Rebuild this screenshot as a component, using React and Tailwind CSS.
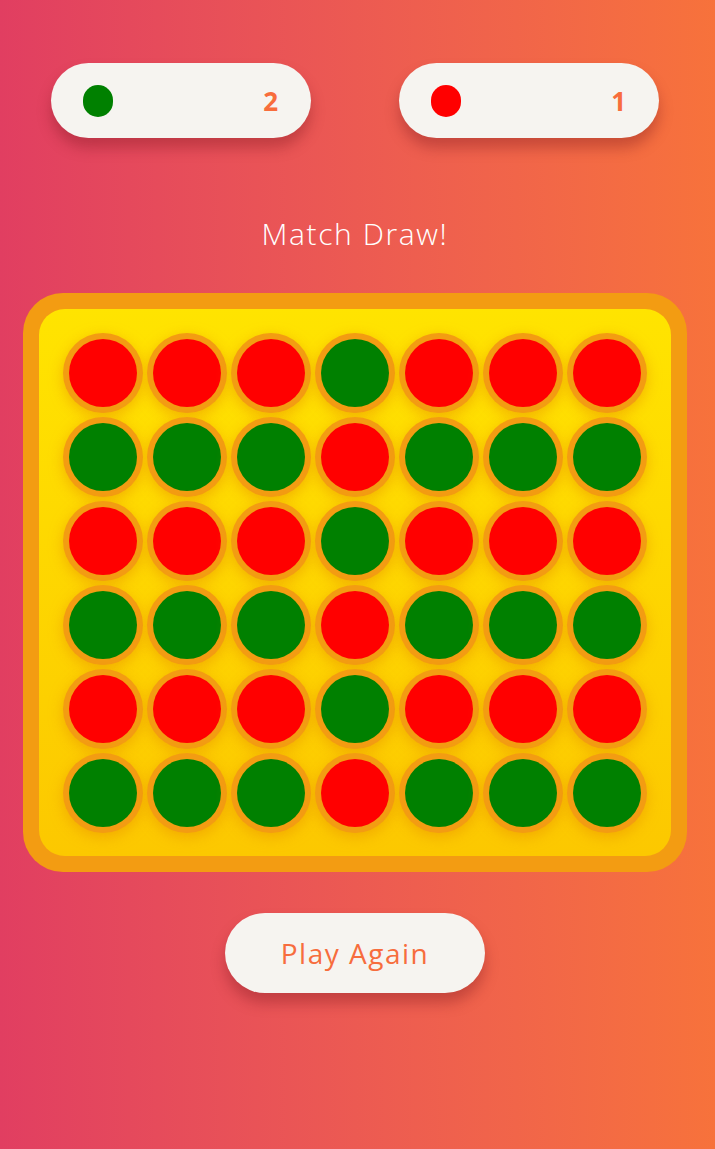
import React from "react";

const board = [
  "RRRGRRR",
  "GGGRGGG",
  "RRRGRRR",
  "GGGRGGG",
  "RRRGRRR",
  "GGGRGGG",
];

function Pill({ color, score }) {
  return (
    <div className="w-[260px] h-[75px] rounded-full bg-[#f6f4f0] shadow-[0_10px_14px_rgba(120,20,30,0.35)] flex items-center justify-between pl-[32px] pr-[33px]">
      <div className={`w-[30px] h-[32px] rounded-full ${color}`} />
      <span className="text-[26px] font-bold text-[#f86d3c] leading-none">
        {score}
      </span>
    </div>
  );
}

export default function App() {
  return (
    <div
      className="w-[715px] h-[1149px] bg-gradient-to-r from-[#e13e61] to-[#f7723b] flex flex-col pt-[63px]"
      style={{ fontFamily: '"Open Sans", sans-serif' }}
    >
      <div className="ml-[51px] w-[608px] flex justify-between">
        <Pill color="bg-[#008000]" score="2" />
        <Pill color="bg-[#ff0000]" score="1" />
      </div>
      <div className="w-[710px] mt-[75px] h-[40px] flex items-center justify-center text-white text-[30px] font-light tracking-[1.6px]">
        Match Draw!
      </div>
      <div className="ml-[23px] mt-[40px] w-[664px] h-[579px] rounded-[40px] bg-[#f39c12] p-[16px]">
        <div className="w-full h-full rounded-[26px] bg-gradient-to-b from-[#ffe400] to-[#fcc800] p-[24px] grid grid-cols-7 gap-[4px]">
          {board.flatMap((row, r) =>
            row.split("").map((c, i) => (
              <div
                key={`${r}-${i}`}
                className="w-[80px] h-[80px] rounded-full bg-[#f39c12] p-[6px] shadow-[0_4px_14px_rgba(235,150,0,0.6)]"
              >
                <div className={`w-full h-full rounded-full ${c === "R" ? "bg-[#ff0000]" : "bg-[#008000]"}`} />
              </div>
            ))
          )}
        </div>
      </div>
      <div className="ml-[225px] mt-[41px] w-[260px] h-[80px] rounded-full bg-[#f6f4f0] shadow-[0_10px_14px_rgba(120,20,30,0.35)] flex items-center justify-center text-[#f76d3d] text-[28px] tracking-[1.5px]">
        Play Again
      </div>
    </div>
  );
}
